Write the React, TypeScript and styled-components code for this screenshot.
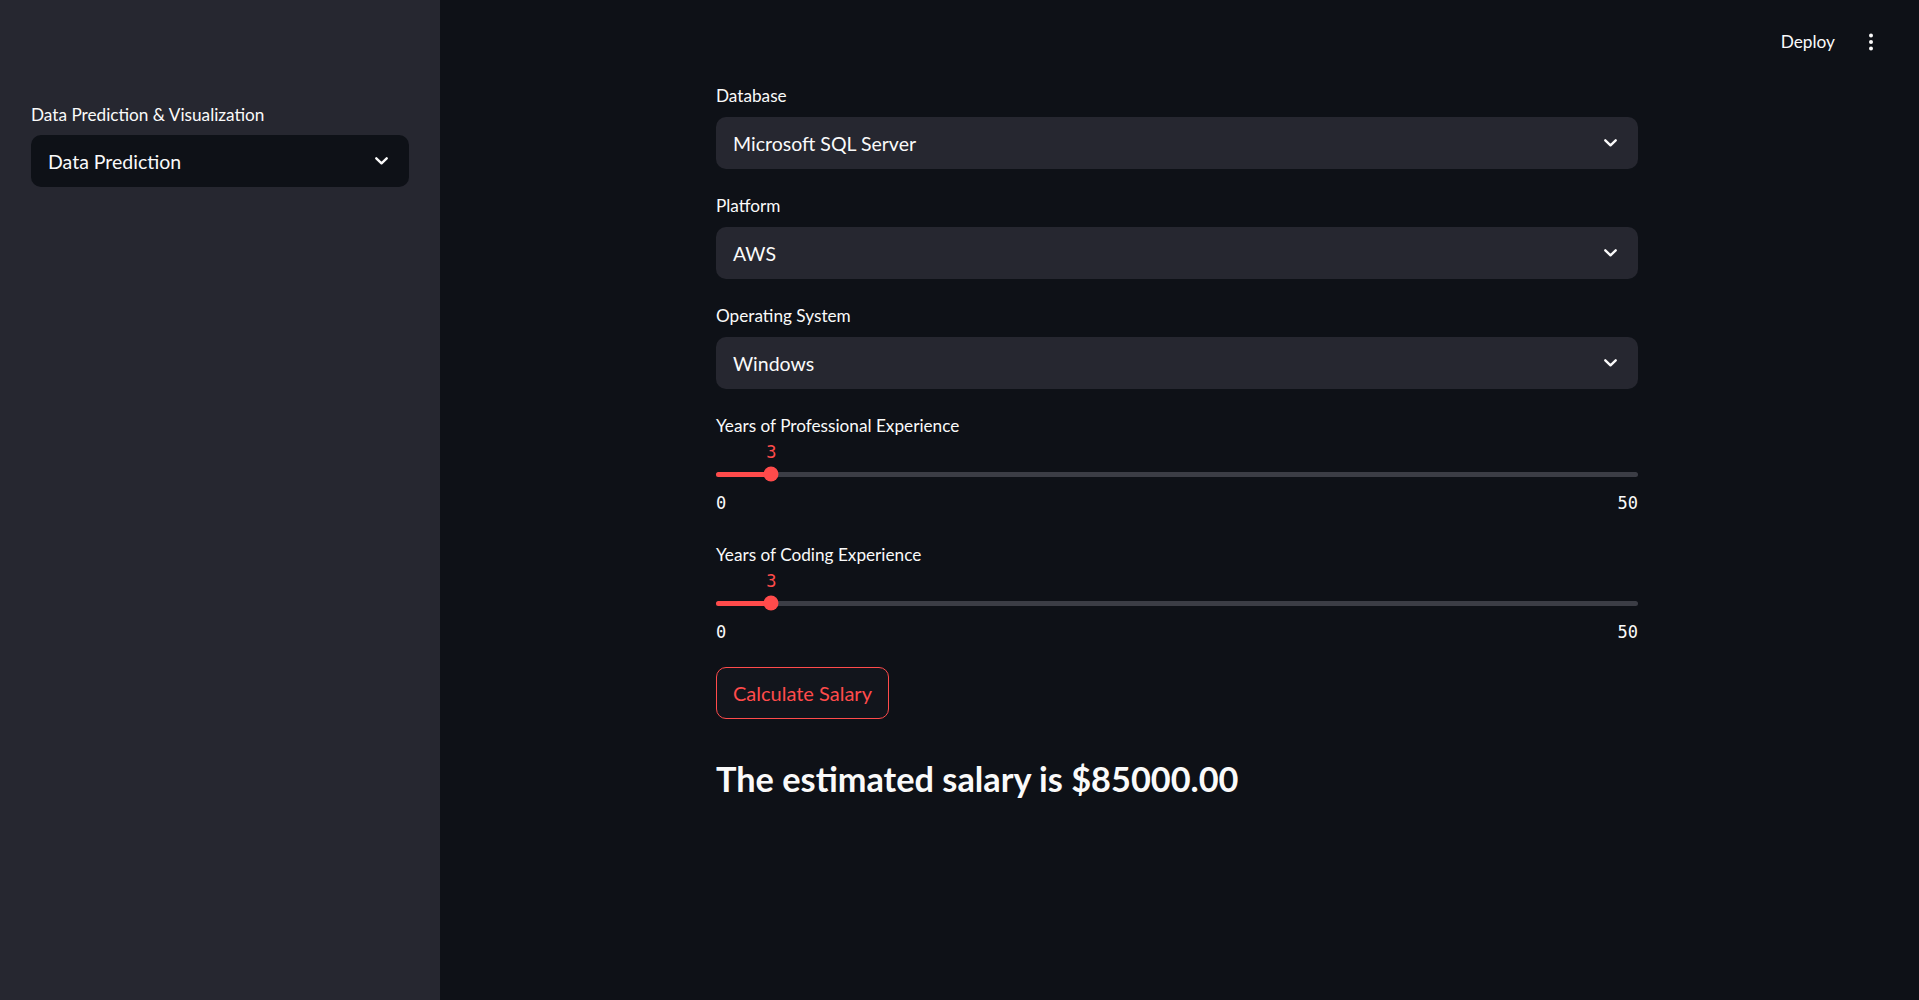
import React from "react";
import styled, { createGlobalStyle } from "styled-components";

const GlobalStyle = createGlobalStyle`
  html, body {
    margin: 0;
    padding: 0;
    background: #0e1117;
    color: #fafafa;
    font-family: "Source Sans Pro", Lato, "Noto Sans", sans-serif;
  }
  #root { min-height: 100vh; }
  * { box-sizing: border-box; }
`;

const Shell = styled.div`
  display: flex;
  min-height: 100vh;
  height: 1000px;
`;

const Sidebar = styled.aside`
  width: 440px;
  flex: 0 0 440px;
  background: #262730;
  padding: 103px 31px 0 31px;
  display: flex;
  flex-direction: column;
`;

const Main = styled.main`
  flex: 1;
  display: flex;
  flex-direction: column;
  padding-right: 5px;
`;

const Header = styled.header`
  height: 84px;
  display: flex;
  justify-content: flex-end;
  align-items: flex-start;
  padding: 30px 40px 0 0;
  gap: 33px;
`;

const DeployButton = styled.span`
  font-size: 17.3px;
  line-height: 24px;
  color: #fafafa;
`;

const Kebab = styled.span`
  display: flex;
  align-items: center;
  height: 24px;
`;

const Content = styled.div`
  width: 922px;
  margin: 0 auto;
  display: flex;
  flex-direction: column;
`;

const Field = styled.div<{ $top?: number }>`
  display: flex;
  flex-direction: column;
  margin-top: ${(p) => p.$top ?? 0}px;
`;

const Label = styled.label<{ $gap?: number }>`
  font-size: 17.2px;
  line-height: 24px;
  height: 24px;
  color: #fafafa;
  margin-bottom: ${(p) => p.$gap ?? 0}px;
`;

const SelectBox = styled.div<{ $dark?: boolean }>`
  height: 52px;
  border-radius: 10px;
  background: ${(p) => (p.$dark ? "#0e1117" : "#262730")};
  display: flex;
  align-items: center;
  justify-content: space-between;
  padding: 0 21px 0 17px;
  font-size: 19.5px;
  color: #fafafa;
`;

const ValueRow = styled.div`
  position: relative;
  height: 24px;
`;

const ThumbValue = styled.span`
  position: absolute;
  top: 2px;
  transform: translateX(-50%);
  font-family: "DejaVu Sans Mono", "Liberation Mono", monospace;
  font-size: 17px;
  line-height: 24px;
  color: #ff4b4b;
`;

const TrackRow = styled.div`
  position: relative;
  height: 24px;
  display: flex;
  align-items: center;
`;

const Track = styled.div`
  position: relative;
  width: 100%;
  height: 5px;
  border-radius: 3px;
  background: #3b3d45;
`;

const Fill = styled.div`
  position: absolute;
  left: 0;
  top: 0;
  bottom: 0;
  border-radius: 3px;
  background: #ff4b4b;
`;

const Thumb = styled.div`
  position: absolute;
  top: 50%;
  width: 15px;
  height: 15px;
  border-radius: 50%;
  background: #ff4b4b;
  transform: translate(-50%, -50%);
`;

const Ticks = styled.div`
  margin-top: 5px;
  height: 24px;
  display: flex;
  justify-content: space-between;
  font-family: "DejaVu Sans Mono", "Liberation Mono", monospace;
  font-size: 17px;
  line-height: 24px;
  color: #fafafa;
`;

const Button = styled.button`
  align-self: flex-start;
  margin-top: 23px;
  height: 52px;
  padding: 0 16px;
  border: 1px solid #ff4b4b;
  border-radius: 10px;
  background: #12151c;
  color: #ff4b4b;
  font-family: inherit;
  font-size: 20px;
  cursor: pointer;
`;

const Result = styled.h3`
  margin: 39px 0 0 0;
  font-size: 34.3px;
  line-height: 42px;
  font-weight: 700;
  color: #fafafa;
`;

const Chevron = () => (
  <svg width="13" height="8" viewBox="0 0 13 8" fill="none">
    <path d="M1.3 1.3 L6.5 6.3 L11.7 1.3" stroke="#fafafa" strokeWidth="2.4" strokeLinecap="round" strokeLinejoin="round" />
  </svg>
);

const Dots = () => (
  <svg width="6" height="18" viewBox="0 0 6 18">
    <circle cx="3" cy="2.5" r="2" fill="#fafafa" />
    <circle cx="3" cy="9" r="2" fill="#fafafa" />
    <circle cx="3" cy="15.5" r="2" fill="#fafafa" />
  </svg>
);

const Select = ({ label, value, dark, gap, top }: { label: string; value: string; dark?: boolean; gap: number; top?: number }) => (
  <Field $top={top}>
    <Label $gap={gap}>{label}</Label>
    <SelectBox $dark={dark}>
      <span>{value}</span>
      <Chevron />
    </SelectBox>
  </Field>
);

const Slider = ({ label, value, min, max, top }: { label: string; value: number; min: number; max: number; top: number }) => {
  const pct = ((value - min) / (max - min)) * 100;
  return (
    <Field $top={top}>
      <Label>{label}</Label>
      <ValueRow>
        <ThumbValue style={{ left: `${pct}%` }}>{value}</ThumbValue>
      </ValueRow>
      <TrackRow>
        <Track>
          <Fill style={{ width: `${pct}%` }} />
          <Thumb style={{ left: `${pct}%` }} />
        </Track>
      </TrackRow>
      <Ticks>
        <span>{min}</span>
        <span>{max}</span>
      </Ticks>
    </Field>
  );
};

export default function App() {
  return (
    <>
      <GlobalStyle />
      <Shell>
        <Sidebar>
          <Select label="Data Prediction & Visualization" value="Data Prediction" dark gap={8} />
        </Sidebar>
        <Main>
          <Header>
            <DeployButton>Deploy</DeployButton>
            <Kebab>
              <Dots />
            </Kebab>
          </Header>
          <Content>
            <Select label="Database" value="Microsoft SQL Server" gap={9} />
            <Select label="Platform" value="AWS" gap={9} top={25} />
            <Select label="Operating System" value="Windows" gap={9} top={25} />
            <Slider label="Years of Professional Experience" value={3} min={0} max={50} top={25} />
            <Slider label="Years of Coding Experience" value={3} min={0} max={50} top={28} />
            <Button>Calculate Salary</Button>
            <Result>The estimated salary is $85000.00</Result>
          </Content>
        </Main>
      </Shell>
    </>
  );
}
